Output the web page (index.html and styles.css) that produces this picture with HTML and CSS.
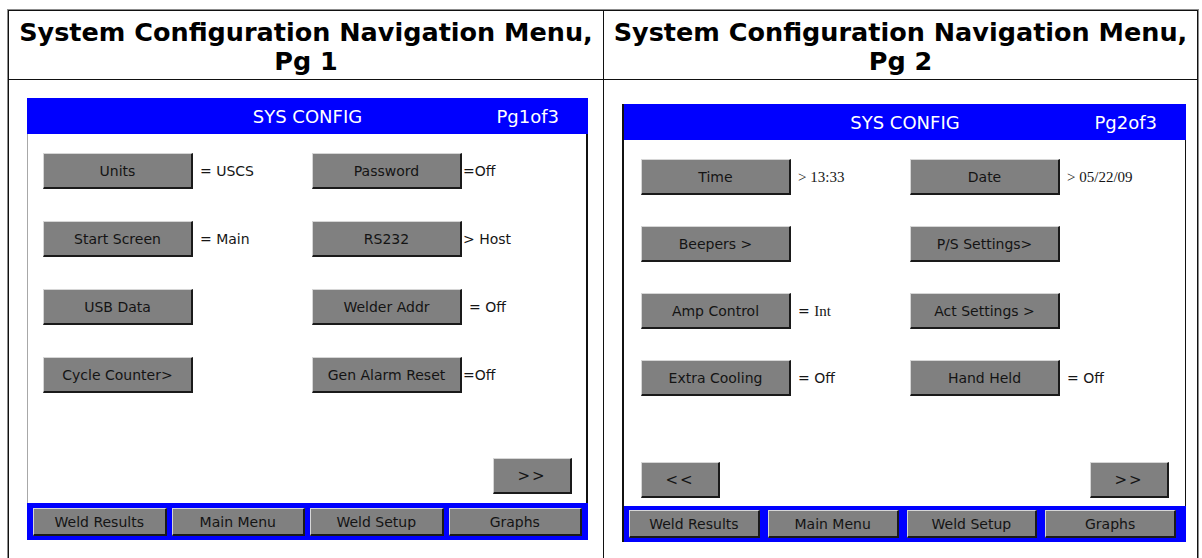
FILE: index.html
```html
<!DOCTYPE html>
<html>
<head>
<meta charset="utf-8">
<link rel="stylesheet" href="styles.css">
</head>
<body>
<div class="doc">
  <div class="cell head c1">System Configuration Navigation Menu, Pg 1</div>
  <div class="cell head c2">System Configuration Navigation Menu, Pg 2</div>
  <div class="cell body c1">
    <div class="screen s1">
      <div class="topbar"><span></span><span class="title">SYS CONFIG</span><span class="pg">Pg1of3</span></div>
      <div class="content">
        <div class="grid">
          <div class="item"><div class="btn">Units</div><span class="val">= USCS</span></div>
          <div class="item"><div class="btn">Password</div><span class="val tight">=Off</span></div>
          <div class="item"><div class="btn">Start Screen</div><span class="val">= Main</span></div>
          <div class="item"><div class="btn">RS232</div><span class="val tight">&gt; Host</span></div>
          <div class="item"><div class="btn">USB Data</div></div>
          <div class="item"><div class="btn">Welder Addr</div><span class="val">= Off</span></div>
          <div class="item"><div class="btn">Cycle Counter&gt;</div></div>
          <div class="item"><div class="btn">Gen Alarm Reset</div><span class="val tight">=Off</span></div>
        </div>
        <div class="nav end"><div class="btn small">&gt;&gt;</div></div>
      </div>
      <div class="tabs">
        <div class="tab">Weld Results</div>
        <div class="tab">Main Menu</div>
        <div class="tab">Weld Setup</div>
        <div class="tab">Graphs</div>
      </div>
    </div>
  </div>
  <div class="cell body c2">
    <div class="screen s2">
      <div class="topbar"><span></span><span class="title">SYS CONFIG</span><span class="pg">Pg2of3</span></div>
      <div class="content">
        <div class="grid">
          <div class="item"><div class="btn">Time</div><span class="val serif">&gt; 13:33</span></div>
          <div class="item"><div class="btn">Date</div><span class="val serif">&gt; 05/22/09</span></div>
          <div class="item"><div class="btn">Beepers &gt;</div></div>
          <div class="item"><div class="btn">P/S Settings&gt;</div></div>
          <div class="item"><div class="btn">Amp Control</div><span class="val">= <span class="serif">Int</span></span></div>
          <div class="item"><div class="btn">Act Settings &gt;</div></div>
          <div class="item"><div class="btn">Extra Cooling</div><span class="val">= Off</span></div>
          <div class="item"><div class="btn">Hand Held</div><span class="val">= Off</span></div>
        </div>
        <div class="nav between"><div class="btn small">&lt;&lt;</div><div class="btn small">&gt;&gt;</div></div>
      </div>
      <div class="tabs">
        <div class="tab">Weld Results</div>
        <div class="tab">Main Menu</div>
        <div class="tab">Weld Setup</div>
        <div class="tab">Graphs</div>
      </div>
    </div>
  </div>
</div>
</body>
</html>
```
FILE: styles.css
```css
html, body {
  margin: 0;
  padding: 0;
  background: #ffffff;
  overflow: hidden;
}

.doc {
  display: grid;
  grid-template-columns: 596px 594px;
  width: 1192px;
  margin: 9px 0 0 7px;
  border: 1px solid #8c8c8c;
  border-bottom: none;
  box-sizing: border-box;
}

.cell {
  box-sizing: border-box;
}

.cell.c1 {
  border-left: 1px solid #111;
  border-right: 1px solid #111;
}

.cell.c2 {
  border-right: 1px solid #111;
}

.head {
  height: 70px;
  border-top: 1px solid #111;
  border-bottom: 1px solid #111;
  text-align: center;
  font-family: "DejaVu Sans", Verdana, sans-serif;
  font-weight: bold;
  font-size: 25.5px;
  line-height: 29px;
  padding-top: 7px;
  color: #000;
}

.body {
  height: 490px;
}

.screen {
  display: flex;
  flex-direction: column;
  background: #fff;
  font-family: "DejaVu Sans", Tahoma, sans-serif;
  color: #161616;
}

.s1 {
  width: 561px;
  height: 442px;
  margin: 18px 0 0 18px;
}

.s2 {
  width: 564px;
  height: 438px;
  margin: 24px 0 0 18px;
  border-left: 2px solid #111;
  box-sizing: border-box;
}

.topbar {
  height: 36px;
  flex: none;
  background: #0000ff;
  color: #fff;
  display: grid;
  grid-template-columns: 1fr auto 1fr;
  align-items: center;
  font-size: 18px;
}

.topbar .pg {
  justify-self: end;
  padding-right: 29px;
}

.content {
  flex: 1;
  display: flex;
  flex-direction: column;
}

.s1 .content {
  border-left: 1px solid #a8a8a8;
  border-right: 2px solid #111;
}

.s2 .content {
  border-right: 1px solid #111;
}

.grid {
  display: grid;
  grid-template-columns: 269px auto;
  row-gap: 32px;
  padding: 19px 0 0 15px;
}

.s2 .grid {
  row-gap: 31px;
  padding: 19px 0 0 17px;
}

.item {
  display: flex;
  align-items: center;
  height: 36px;
}

.btn, .tab {
  box-sizing: border-box;
  background: #808080;
  border-top: 1px solid #d6d6d6;
  border-left: 1px solid #d6d6d6;
  border-right: 2px solid #1a1a1a;
  border-bottom: 2px solid #1a1a1a;
  display: flex;
  align-items: center;
  justify-content: center;
  font-size: 14px;
  color: #141414;
  white-space: nowrap;
}

.btn {
  width: 150px;
  height: 36px;
  flex: none;
}

.btn.small {
  width: 79px;
  letter-spacing: 2px;
  font-size: 15px;
}

.val {
  margin-left: 7px;
  font-size: 14px;
}

.val.tight {
  margin-left: 1px;
}

.serif {
  font-family: "Liberation Serif", "Times New Roman", serif;
  font-size: 15px;
}

.nav {
  margin-top: auto;
  display: flex;
  padding: 0 14px 9px 16px;
}

.nav.end {
  justify-content: flex-end;
}

.nav.between {
  justify-content: space-between;
  padding: 0 16px 8px 17px;
}

.tabs {
  height: 37px;
  flex: none;
  background: #0000ff;
  display: grid;
  grid-template-columns: repeat(4, 1fr);
  column-gap: 5px;
  padding: 5px 6px 4px 6px;
  box-sizing: border-box;
}

.s2 .tabs {
  height: 36px;
  column-gap: 8px;
  padding: 4px 10px 4px 5px;
}

.tab {
  height: 28px;
}
```
